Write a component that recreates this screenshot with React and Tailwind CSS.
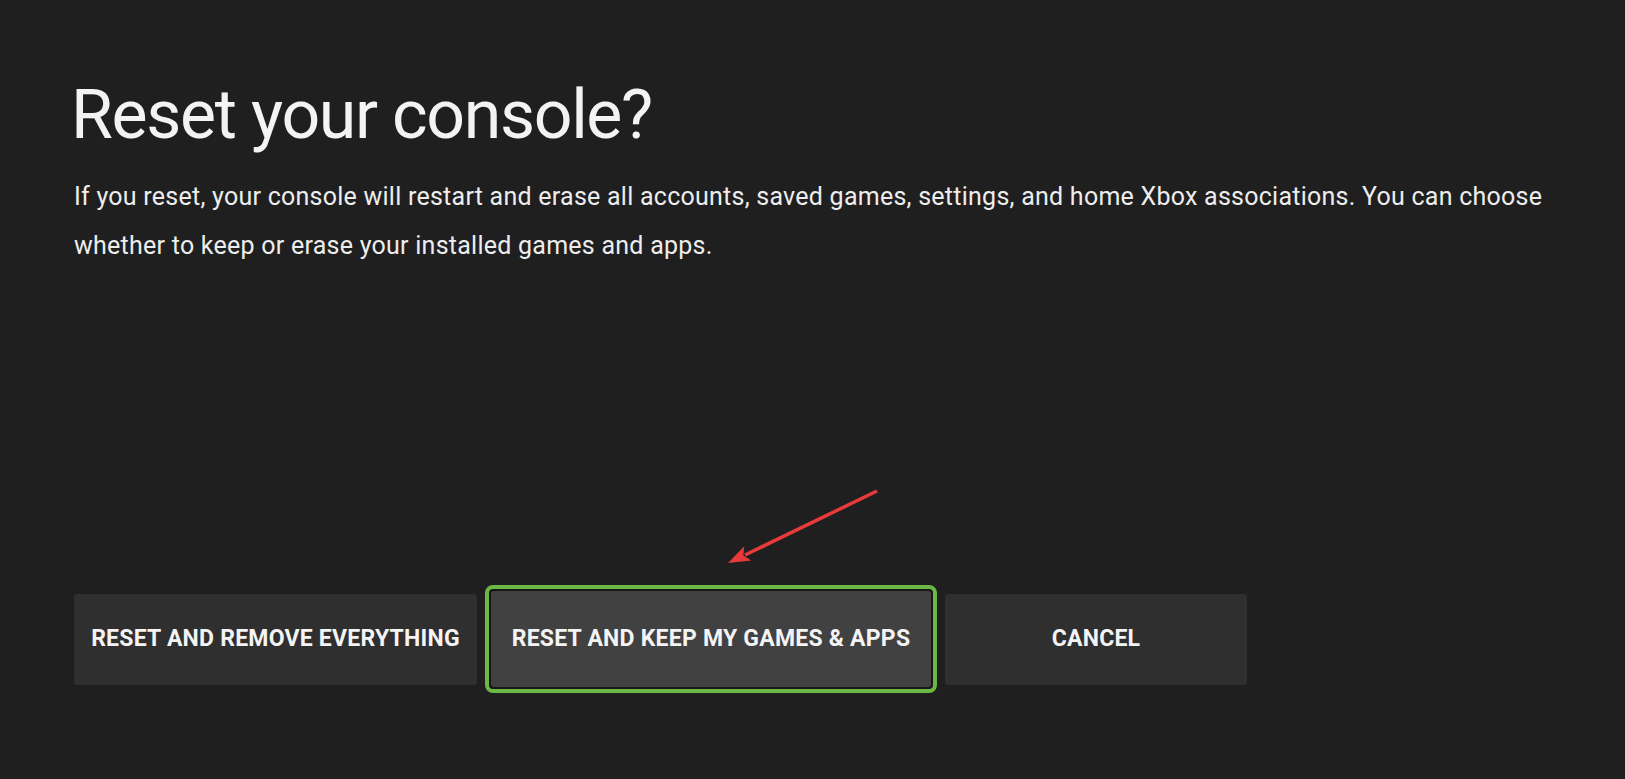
import React from 'react';

const font = { fontFamily: 'Roboto, "Noto Sans", sans-serif' };

function ResetArrow() {
  // red annotation arrow pointing at the focused option
  return (
    <svg
      className="absolute left-[720px] top-[480px] pointer-events-none"
      width="170"
      height="95"
      viewBox="0 0 170 95"
    >
      <line x1="157" y1="11" x2="25" y2="75" stroke="#e83a3b" strokeWidth="3.5" strokeLinecap="butt" />
      <polygon points="8,83 31.3,80.6 23.3,75.6 24.3,66.2" fill="#e83a3b" />
    </svg>
  );
}

function OptionButton({ label, width, focused = false }) {
  if (focused) {
    return (
      <div className={`${width} h-[108px] rounded-[8px] border-[4px] border-[#6cb845] bg-[#181818] p-[2px] shrink-0`}>
        <div className="h-full w-full rounded-[3px] bg-[#414141] flex items-center justify-center">
          <span className="text-[23px] font-bold uppercase tracking-[0.01em] text-[#f4f4f4]">{label}</span>
        </div>
      </div>
    );
  }
  return (
    <div className={`${width} h-[91px] rounded-[3px] bg-[#2f2f2f] flex items-center justify-center shrink-0`}>
      <span className="text-[23px] font-bold uppercase tracking-[0.01em] text-[#f4f4f4]">{label}</span>
    </div>
  );
}

export default function App() {
  return (
    <div className="relative min-h-[779px] w-full bg-[#1f1f1f] text-[#f3f3f3] overflow-hidden" style={font}>
      <div className="pl-[74px] pt-[81px]">
        <h1 className="-ml-[3px] text-[68px] leading-[68px] font-normal tracking-[-0.02em]">Reset your console?</h1>
        <p className="mt-[23px] w-[1520px] text-[25px] leading-[49px] tracking-[0.01em] text-[#ededed]">
          If you reset, your console will restart and erase all accounts, saved games, settings, and home Xbox associations. You can choose whether to keep or erase your installed games and apps.
        </p>
        <div className="mt-[315px] flex items-center gap-[8px]">
          <OptionButton label="Reset and remove everything" width="w-[403px]" />
          <OptionButton label="Reset and keep my games & apps" width="w-[452px]" focused />
          <OptionButton label="Cancel" width="w-[302px]" />
        </div>
      </div>
      <ResetArrow />
    </div>
  );
}
